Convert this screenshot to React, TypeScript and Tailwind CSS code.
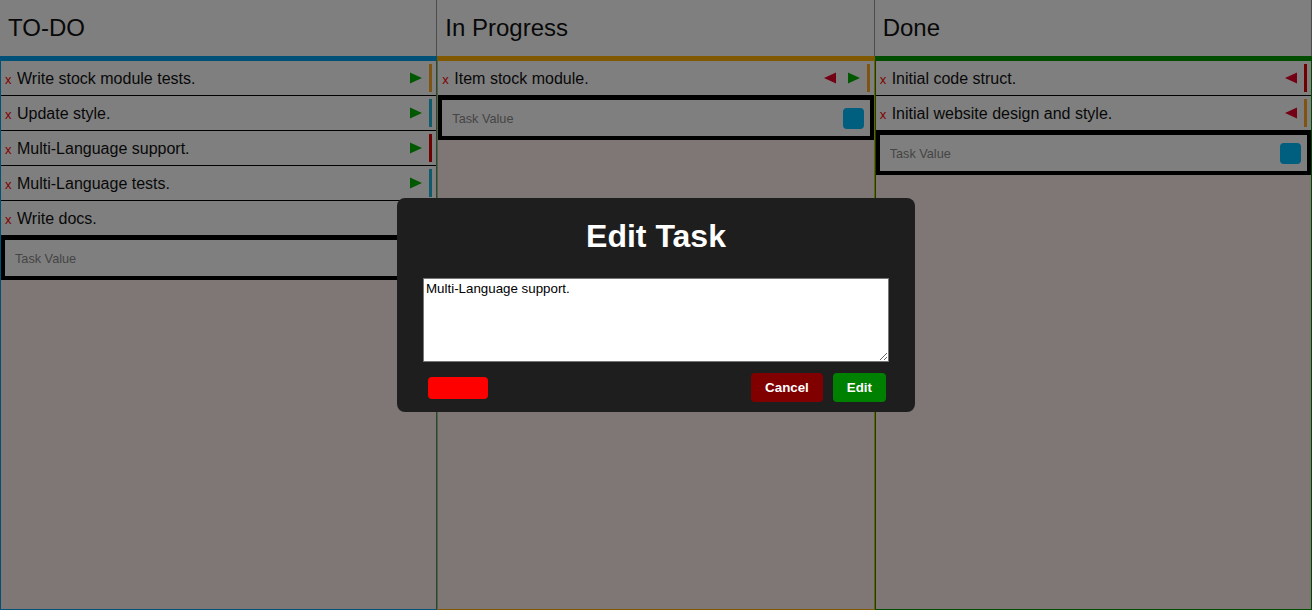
import React from "react";

type Task = { text: string; stripe: string; prev?: boolean; next?: boolean };
type Column = { title: string; bar: string; tasks: Task[] };

const COLUMNS: Column[] = [
  {
    title: "TO-DO",
    bar: "border-[#00a0f0]",
    tasks: [
      { text: "Write stock module tests.", stripe: "bg-[#ffa820]", next: true },
      { text: "Update style.", stripe: "bg-[#20b4dc]", next: true },
      { text: "Multi-Language support.", stripe: "bg-[#dd0000]", next: true },
      { text: "Multi-Language tests.", stripe: "bg-[#20b4dc]", next: true },
      { text: "Write docs.", stripe: "bg-[#ffa820]", next: true },
    ],
  },
  {
    title: "In Progress",
    bar: "border-[#ffb000]",
    tasks: [{ text: "Item stock module.", stripe: "bg-[#ffa820]", prev: true, next: true }],
  },
  {
    title: "Done",
    bar: "border-[#009a00]",
    tasks: [
      { text: "Initial code struct.", stripe: "bg-[#dd0000]", prev: true },
      { text: "Initial website design and style.", stripe: "bg-[#ffa820]", prev: true },
    ],
  },
];

function Arrow({ dir }: { dir: "left" | "right" }) {
  return (
    <svg width="12" height="12" viewBox="0 0 12 12" className="shrink-0">
      {dir === "right" ? (
        <polygon points="0,0.5 12,6 0,11.5" fill="#00b000" />
      ) : (
        <polygon points="12,0.5 0,6 12,11.5" fill="#e8002c" />
      )}
    </svg>
  );
}

function TaskRow({ task }: { task: Task }) {
  return (
    <div className="flex h-[35px] items-center border-b border-black bg-white pl-[4px] pr-[4px]">
      <div className="flex flex-1 items-center pt-[2px]">
        <span className="w-[7px] text-[13px] leading-none text-[#ff0000]">x</span>
        <span className="ml-[5px] flex-1 truncate text-[16px] text-[#111]">{task.text}</span>
      </div>
      <div className="flex items-center gap-3">
        {task.prev && <Arrow dir="left" />}
        {task.next && <Arrow dir="right" />}
      </div>
      <div className={`ml-[7px] h-[28px] w-[3px] ${task.stripe}`} />
    </div>
  );
}

function NewTask() {
  return (
    <div className="flex h-[44px] items-center border-4 border-black bg-white pl-[10px] pr-[6px]">
      <input
        placeholder="Task Value"
        className="flex-1 bg-transparent pt-[3px] text-[12.7px] outline-none placeholder:text-[#8a8a8a]"
      />
      <div className="h-[21px] w-[21px] rounded-[4px] bg-[#00bcff]" />
    </div>
  );
}

function Board({ col }: { col: Column }) {
  return (
    <div className="flex min-w-0 flex-1 flex-col">
      <div className="flex h-[56px] items-center border-r border-[#9a9a9a] bg-white px-2 text-[24px] text-[#111]">
        {col.title}
      </div>
      <div className={`flex flex-1 flex-col border-x border-b border-t-[5px] bg-[#feeeea] ${col.bar}`}>
        {col.tasks.map((t) => (
          <TaskRow key={t.text} task={t} />
        ))}
        <NewTask />
      </div>
    </div>
  );
}

export default function App() {
  return (
    <div className="relative flex h-[610px] w-full font-['Liberation_Sans',Arial,sans-serif]">
      {COLUMNS.map((c) => (
        <Board key={c.title} col={c} />
      ))}

      {/* dim + edit modal */}
      <div className="absolute inset-0 flex items-center justify-center bg-black/50">
        <div className="w-[518px] rounded-lg bg-[#1e1e1e] px-[26px] pb-[10px] pt-[20px]">
          <h1 className="text-center text-[32px] font-bold leading-[37px] text-white">Edit Task</h1>
          <textarea
            defaultValue="Multi-Language support."
            className="mt-[23px] block h-[84px] w-full border border-[#767676] bg-white p-[2px] text-[13.33px] leading-[15px] text-black outline-none"
          />
          <div className="mt-[11px] flex items-center justify-between">
            <div className="ml-[5px] h-[22px] w-[60px] rounded-[4px] bg-[#ff0000]" />
            <div className="mr-[3px] flex gap-[10px]">
              <button className="h-[29px] rounded-[4px] bg-[#800000] px-[14px] text-[13.33px] font-bold text-white">
                Cancel
              </button>
              <button className="h-[29px] rounded-[4px] bg-[#008000] px-[14px] text-[13.33px] font-bold text-white">
                Edit
              </button>
            </div>
          </div>
        </div>
      </div>
    </div>
  );
}
